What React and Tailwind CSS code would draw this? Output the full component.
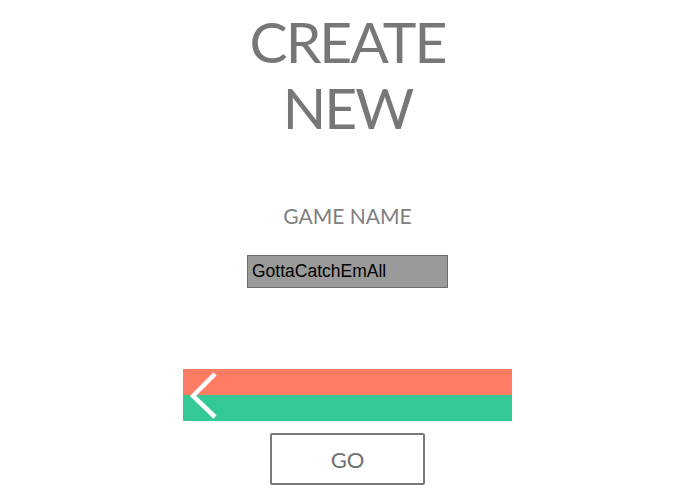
import React from 'react';

const font = { fontFamily: 'Lato, "Noto Sans", sans-serif' };

export default function App() {
  return (
    <div className="w-[695px] h-[494px] bg-white flex flex-col items-center overflow-hidden" style={font}>
      <h1 className="mt-[8px] text-[57px] leading-[66px] text-[#777777] text-center tracking-[-2px]">
        CREATE
        <br />
        NEW
      </h1>

      <div className="mt-[61px] text-[21px] leading-[30px] text-[#808080]">GAME NAME</div>

      <input
        className="mt-[24px] w-[201px] h-[33px] bg-[#9a9a9a] border border-[#6e6e6e] px-[4px] text-[17.5px] text-black outline-none"
        style={{ fontFamily: '"Liberation Sans", Arial, sans-serif' }}
        defaultValue="GottaCatchEmAll"
      />

      <div className="relative mt-[81px] w-[329px] h-[52px] flex flex-col">
        <div className="h-[26px] bg-[#ff7c64]" />
        <div className="h-[26px] bg-[#32c995]" />
        <svg className="absolute left-0 top-0" width="60" height="52" viewBox="0 0 60 52">
          <polyline points="32,5 10,27 32,48" fill="none" stroke="white" strokeWidth="4.5" />
        </svg>
      </div>

      <button className="mt-[12px] w-[155px] h-[52px] border-2 border-[#7a7a7a] rounded-[2px] text-[22px] text-[#707070] bg-white">
        GO
      </button>
    </div>
  );
}
